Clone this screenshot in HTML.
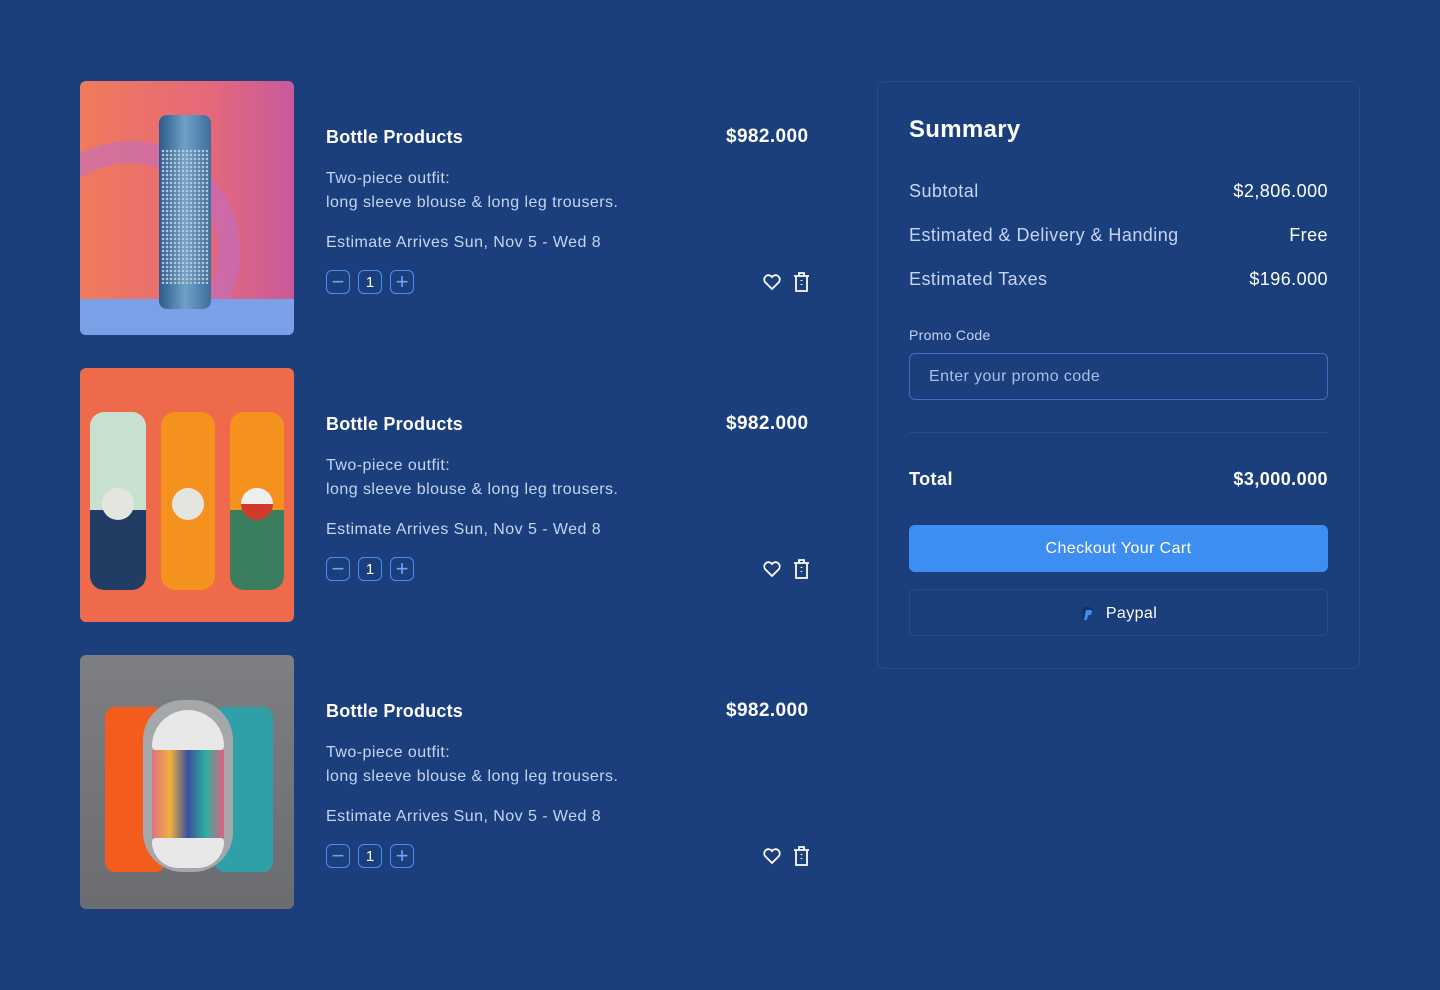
<!DOCTYPE html>
<html><head><meta charset="utf-8"><style>
*{margin:0;padding:0;box-sizing:border-box}
body{width:1440px;height:990px;background:#1b3f7d;font-family:"Liberation Sans",sans-serif;color:#fff;position:relative;overflow:hidden}
.img{position:absolute;left:80px;width:214px;height:254px;border-radius:6px;overflow:hidden}
.t{position:absolute;font-size:18px;font-weight:bold;letter-spacing:0.2px}
.p{position:absolute;left:726px;font-size:19px;font-weight:bold;letter-spacing:0.4px}
.d{position:absolute;left:326px;font-size:16px;color:#c4d4f2;line-height:24px;letter-spacing:0.45px}
.q{position:absolute;left:326px;display:flex;gap:8px}
.q div{width:24px;height:24px;border:1.5px solid #4a8ef0;border-radius:6px;display:flex;align-items:center;justify-content:center;font-size:15px;color:#fff}
.q div.s{font-size:22px;color:#6aa6ff;font-weight:300}
.ic{position:absolute;left:761px}
.card{position:absolute;left:877px;top:81px;width:483px;height:588px;border:1px solid #244d8c;border-radius:8px}
.row{position:absolute;left:909px;width:419px;display:flex;justify-content:space-between;font-size:18px;letter-spacing:0.45px}
.row span:first-child{color:#c4d4f2}
</style></head><body>

<div class="img" style="top:81px;background:linear-gradient(90deg,#f07a5c 0%,#e5697a 60%,#c85a9c 100%)">
 <div style="position:absolute;left:-60px;top:60px;width:220px;height:220px;border-radius:50%;border:22px solid rgba(190,110,200,.55)"></div>
 <div style="position:absolute;left:0;top:218px;width:214px;height:36px;background:#7aa0e8"></div>
 <div style="position:absolute;left:79px;top:34px;width:52px;height:194px;border-radius:8px;background:linear-gradient(90deg,#2d5a8a,#6fa1c8,#3d6e98);"></div>
 <div style="position:absolute;left:81px;top:68px;width:48px;height:135px;background:radial-gradient(circle,#b9c7d8 1px,transparent 1.5px) 0 0/4px 4px"></div>
</div>

<div class="img" style="top:368px;background:#ee6a4a">
 <div style="position:absolute;left:10px;top:44px;width:56px;height:178px;border-radius:14px;background:linear-gradient(180deg,#c8e0d0 0 55%,#213d63 55%)"></div>
 <div style="position:absolute;left:81px;top:44px;width:54px;height:178px;border-radius:14px;background:#f5921e"></div>
 <div style="position:absolute;left:150px;top:44px;width:54px;height:178px;border-radius:14px;background:linear-gradient(180deg,#f5921e 0 55%,#3b7e5e 55%)"></div>
 <div style="position:absolute;left:22px;top:120px;width:32px;height:32px;border-radius:50%;background:#e5e5e0"></div>
 <div style="position:absolute;left:92px;top:120px;width:32px;height:32px;border-radius:50%;background:#e5e5e0"></div>
 <div style="position:absolute;left:161px;top:120px;width:32px;height:32px;border-radius:50%;background:linear-gradient(180deg,#eee 50%,#d03a2a 50%)"></div>
</div>

<div class="img" style="top:655px;background:linear-gradient(180deg,#7d7f82,#6a6c70)">
 <div style="position:absolute;left:25px;top:52px;width:60px;height:165px;border-radius:10px;background:#f35c1c"></div>
 <div style="position:absolute;left:135px;top:52px;width:58px;height:165px;border-radius:10px;background:#2fa0a8"></div>
 <div style="position:absolute;left:63px;top:45px;width:90px;height:172px;border-radius:40px;background:#a5a8ab"></div>
 <div style="position:absolute;left:72px;top:55px;width:72px;height:40px;border-radius:36px 36px 4px 4px;background:#e8e8e8"></div>
 <div style="position:absolute;left:72px;top:95px;width:72px;height:88px;background:linear-gradient(90deg,#e07080,#f0b040,#3a4ea0,#2fb0a0,#e06080)"></div>
 <div style="position:absolute;left:72px;top:183px;width:72px;height:30px;border-radius:4px 4px 30px 30px;background:#e8e8e8"></div>
</div>

<div class="t" style="left:326px;top:127px">Bottle Products</div>
<div class="p" style="top:126px">$982.000</div>
<div class="d" style="top:167px">Two-piece outfit:<br>long sleeve blouse &amp; long leg trousers.</div>
<div class="d" style="top:231px">Estimate Arrives Sun, Nov 5 - Wed 8</div>
<div class="q" style="top:270px"><div class="s">−</div><div>1</div><div class="s">+</div></div>

<div class="t" style="left:326px;top:414px">Bottle Products</div>
<div class="p" style="top:413px">$982.000</div>
<div class="d" style="top:454px">Two-piece outfit:<br>long sleeve blouse &amp; long leg trousers.</div>
<div class="d" style="top:518px">Estimate Arrives Sun, Nov 5 - Wed 8</div>
<div class="q" style="top:557px"><div class="s">−</div><div>1</div><div class="s">+</div></div>

<div class="t" style="left:326px;top:701px">Bottle Products</div>
<div class="p" style="top:700px">$982.000</div>
<div class="d" style="top:741px">Two-piece outfit:<br>long sleeve blouse &amp; long leg trousers.</div>
<div class="d" style="top:805px">Estimate Arrives Sun, Nov 5 - Wed 8</div>
<div class="q" style="top:844px"><div class="s">−</div><div>1</div><div class="s">+</div></div>

<svg class="ic" style="top:270px" width="54" height="24" viewBox="0 0 54 24" fill="none" stroke="#fff" stroke-width="1.8"><path d="M11 19l-7-7a4 4 0 0 1 7-5a4 4 0 0 1 7 5z"/><path d="M33 6h15M38 6V3h5v3M35 6v15h11V6M40.5 10v1M40.5 14v1"/></svg>
<svg class="ic" style="top:557px" width="54" height="24" viewBox="0 0 54 24" fill="none" stroke="#fff" stroke-width="1.8"><path d="M11 19l-7-7a4 4 0 0 1 7-5a4 4 0 0 1 7 5z"/><path d="M33 6h15M38 6V3h5v3M35 6v15h11V6M40.5 10v1M40.5 14v1"/></svg>
<svg class="ic" style="top:844px" width="54" height="24" viewBox="0 0 54 24" fill="none" stroke="#fff" stroke-width="1.8"><path d="M11 19l-7-7a4 4 0 0 1 7-5a4 4 0 0 1 7 5z"/><path d="M33 6h15M38 6V3h5v3M35 6v15h11V6M40.5 10v1M40.5 14v1"/></svg>

<div class="card"></div>
<div style="position:absolute;left:909px;top:116px;font-size:24px;font-weight:bold;letter-spacing:0.3px">Summary</div>
<div class="row" style="top:181px"><span>Subtotal</span><span>$2,806.000</span></div>
<div class="row" style="top:225px"><span>Estimated &amp; Delivery &amp; Handing</span><span>Free</span></div>
<div class="row" style="top:269px"><span>Estimated Taxes</span><span>$196.000</span></div>
<div style="position:absolute;left:909px;top:327px;font-size:14px;color:#c4d4f2;letter-spacing:0.3px">Promo Code</div>
<div style="position:absolute;left:909px;top:353px;width:419px;height:47px;border:1px solid #3d6fc4;border-radius:6px;padding:14px 19px;font-size:16px;color:#a9bfe8;letter-spacing:0.4px">Enter your promo code</div>
<div style="position:absolute;left:909px;top:432px;width:419px;height:1px;background:#244d8c"></div>
<div class="row" style="top:469px;font-weight:bold"><span style="color:#fff">Total</span><span>$3,000.000</span></div>
<div style="position:absolute;left:909px;top:525px;width:419px;height:47px;background:#3d8ef0;border-radius:6px;text-align:center;line-height:48px;font-size:16px;letter-spacing:0.4px">Checkout Your Cart</div>
<div style="position:absolute;left:909px;top:589px;width:419px;height:47px;border:1px solid #244d8c;border-radius:6px;text-align:center;line-height:47px;font-size:16px;letter-spacing:0.4px"><svg width="14" height="16" viewBox="0 0 14 16" style="vertical-align:-3px;margin-right:12px"><path d="M3 2h6a3 3 0 0 1 0 6H6l-1 6H2z" fill="#1a2f6a"/><path d="M6 5h5a3 3 0 0 1-1 5H8l-1 5H4z" fill="#3d8ef0"/></svg>Paypal</div>
</body></html>
